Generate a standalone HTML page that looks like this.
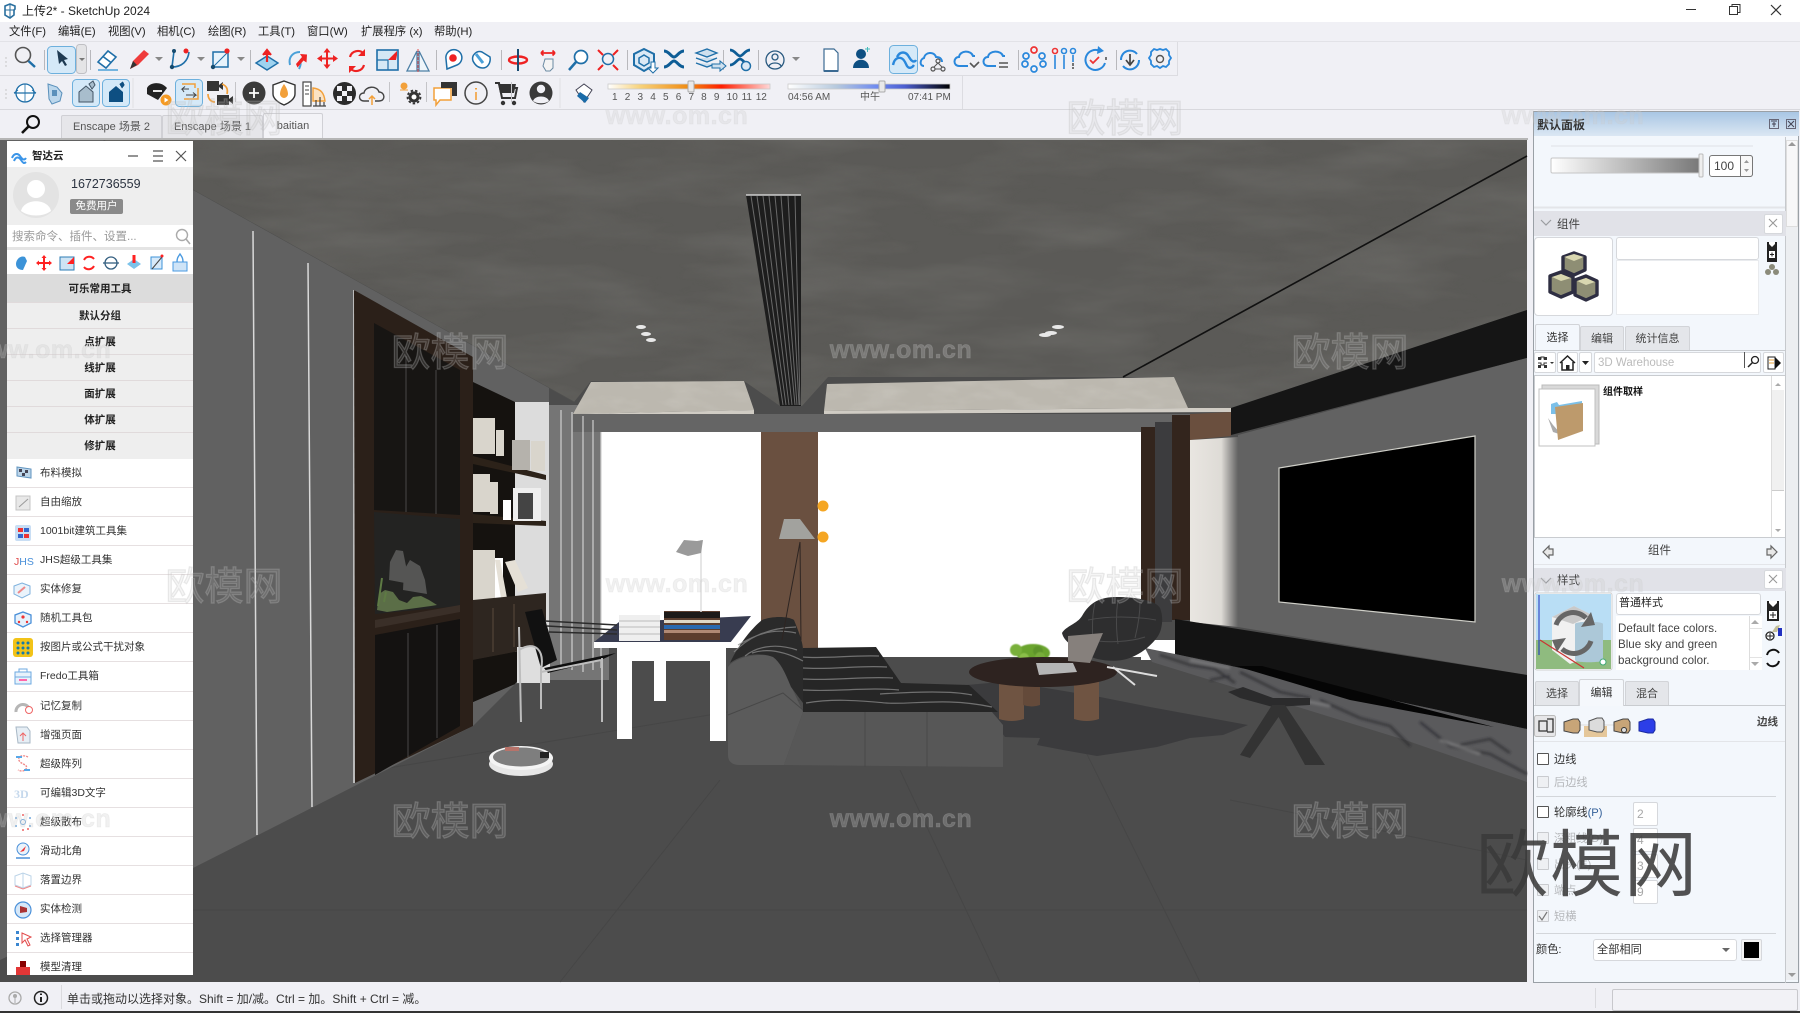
<!DOCTYPE html>
<html lang="zh"><head><meta charset="utf-8"><title>SketchUp 2024</title>
<style>
html,body{margin:0;padding:0;width:1800px;height:1013px;overflow:hidden;background:#f0f0f5}
body{position:relative;font-family:"Liberation Sans","Noto Sans CJK SC",sans-serif;color:#333}
.a{position:absolute}
.t{position:absolute;white-space:nowrap;line-height:1}
svg{position:absolute;left:0;top:0;overflow:visible}
.menu span{position:absolute;top:25px;font-size:11.3px;line-height:14px;color:#222;white-space:nowrap}
.tab{position:absolute;top:115px;height:23px;background:#e6e6ea;border:1px solid #d0d0d5;border-bottom:0;box-sizing:border-box;font-size:11px;line-height:22px;color:#555;text-align:center;border-radius:2px 2px 0 0}
.grp{position:absolute;left:7px;width:186px;background:#eee;border-bottom:1px solid #e0dadb;box-sizing:border-box;font-size:10.5px;font-weight:bold;color:#222;text-align:center;height:26px;line-height:27px}
.row{position:absolute;left:7px;width:186px;height:29px;background:#fff;border-bottom:1px solid #e6e0e1;box-sizing:border-box;font-size:10.5px;line-height:29px;padding-left:33px;color:#333;white-space:nowrap}
.box{position:absolute;background:#fff;border:1px solid #d6d8dc;box-sizing:border-box;border-radius:2px}
.ptab{position:absolute;background:#e4e6ea;border:1px solid #d2d4d8;border-bottom:0;box-sizing:border-box;font-size:11px;text-align:center;color:#444;border-radius:2px 2px 0 0}
.ptab.on{background:#f3f7fc;color:#333}
.phd{position:absolute;left:1534px;width:252px;height:24px;background:#e1e2e8;font-size:11.5px;color:#444;line-height:25px}
.cb{position:absolute;left:1537px;width:12px;height:12px;background:#fff;border:1px solid #555;box-sizing:border-box;border-radius:1px}
.cb.d{background:#eef0f3;border-color:#c9cbcf}
.l{position:absolute;left:1554px;font-size:11.2px;line-height:14px;color:#333;white-space:nowrap}
.l.d{color:#b5b7ba}
.wm{position:absolute;font-family:"Noto Sans CJK SC",sans-serif;font-size:39px;line-height:1;color:rgba(190,190,190,.16);-webkit-text-stroke:1.2px rgba(190,190,190,.3);white-space:nowrap;transform:translateX(-50%)}
.ww{position:absolute;font-family:"Liberation Sans",sans-serif;font-weight:bold;font-size:25px;line-height:1;letter-spacing:.5px;color:rgba(205,205,205,.28);-webkit-text-stroke:.8px rgba(200,200,200,.22);white-space:nowrap;transform:translateX(-50%)}
</style></head><body>

<!-- title bar -->
<div class="a" style="left:0;top:0;width:1800px;height:22px;background:#fff"></div>
<svg width="20" height="20" style="left:2px;top:2px"><path d="M3 4l5-2 5 2v3l-1 1v5l-4 3-5-3z" fill="none" stroke="#2a6f9e" stroke-width="1.6"/><path d="M8 2v14M3 8h10" stroke="#2a6f9e" stroke-width="1"/></svg>
<div class="t" style="left:22px;top:5px;font-size:12px;color:#222">上传2* - SketchUp 2024</div>
<svg width="1800" height="24"><path d="M1686 9.5h10" stroke="#333"/><rect x="1729.5" y="6.5" width="8" height="8" fill="none" stroke="#333"/><path d="M1732 6.5v-2h8v8h-2" fill="none" stroke="#333"/><path d="M1771 5l10 10M1781 5l-10 10" stroke="#333" stroke-width="1.2"/></svg>

<!-- menu -->
<div class="menu">
<span style="left:9px">文件(F)</span><span style="left:58px">编辑(E)</span><span style="left:108px">视图(V)</span><span style="left:157px">相机(C)</span><span style="left:208px">绘图(R)</span><span style="left:258px">工具(T)</span><span style="left:307px">窗口(W)</span><span style="left:361px">扩展程序 (x)</span><span style="left:434px">帮助(H)</span>
</div>

<!-- scene -->
<svg width="1800" height="1013">
<defs>
<filter id="n1" x="0" y="0" width="100%" height="100%"><feTurbulence type="fractalNoise" baseFrequency="0.007 0.03" numOctaves="4" seed="7"/><feColorMatrix values="0 0 0 0 0.27  0 0 0 0 0.27  0 0 0 0 0.25  1.5 0 0 0 -0.55"/></filter>
<filter id="n2" x="0" y="0" width="100%" height="100%"><feTurbulence type="fractalNoise" baseFrequency="0.03 0.08" numOctaves="3" seed="3"/><feColorMatrix values="0 0 0 0 0.62  0 0 0 0 0.6  0 0 0 0 0.55  1.6 0 0 0 -0.65"/></filter>
<filter id="bl"><feGaussianBlur stdDeviation="1.3"/></filter>
<filter id="bs"><feGaussianBlur stdDeviation=".6"/></filter>
<linearGradient id="curve" x1="0" x2="1" y1="0" y2="0"><stop offset="0" stop-color="#e9e6e1"/><stop offset=".65" stop-color="#dedbd6"/><stop offset="1" stop-color="#626262"/></linearGradient>
<clipPath id="ceil"><path d="M0 140H1527V310L1231 408 1188 408 1174 377H828L802 406H780L744 381H591L574 402 103 140Z"/></clipPath>
<clipPath id="beam"><path d="M591 382L744 381 754 410 573 414ZM827 384L1174 377 1188 408 824 411Z"/></clipPath>
</defs>
<rect x="0" y="140" width="1527" height="842" fill="#4c4c4c"/>
<!-- floor lines -->
<path d="M195 800L800 700M0 910H1527M1070 720L1200 982M560 982L720 780M1230 800L1527 860M900 770L1000 982" stroke="#464646" fill="none"/>
<!-- back wall -->
<rect x="549" y="405" width="60" height="275" fill="#757575"/>
<rect x="601" y="432" width="160" height="216" fill="#fff"/>
<rect x="761" y="416" width="57" height="232" fill="#6a5040"/>
<rect x="818" y="432" width="323" height="225" fill="#fff"/>
<rect x="573" y="414" width="660" height="18" fill="#656565"/>
<!-- ceiling -->
<path d="M0 140H1527V310L1231 408 1188 408 1174 377H828L802 406H780L744 381H591L574 402 103 140Z" fill="#5b5a57"/>
<g clip-path="url(#ceil)"><rect x="0" y="140" width="1527" height="280" filter="url(#n1)" opacity=".32"/></g>
<path d="M103 140L574 402" stroke="#4f4f4e" fill="none"/>
<!-- beams -->
<path d="M591 382L744 381 754 410 573 414Z" fill="#bcb8af"/>
<path d="M827 384L1174 377 1188 408 824 411Z" fill="#bcb8af"/>
<path d="M573 414L754 410V414H573ZM824 411L1188 408 1231 408V412L824 414Z" fill="#d0ccc4"/>
<g clip-path="url(#beam)"><rect x="570" y="375" width="620" height="42" filter="url(#n2)" opacity=".5"/></g>
<!-- vent -->
<path d="M746 195H801V406H780Z" fill="#1d1d1d"/>
<path d="M751 196L783 405M757 196L786 405M763 196L789 405M769 196L792 405M775 196L795 405M781 196L797 405M788 196L799 405M795 196L800 405" stroke="#6a6a6a" stroke-width="1"/>
<path d="M746 195H801" stroke="#cfcfcf" stroke-width="1.5"/>
<!-- spots -->
<g fill="#e8e8e8"><ellipse cx="641" cy="327" rx="5" ry="2"/><ellipse cx="646" cy="334" rx="5" ry="2"/><ellipse cx="651" cy="340" rx="5" ry="2"/><ellipse cx="1058" cy="327" rx="6" ry="2"/><ellipse cx="1051" cy="333" rx="6" ry="2"/><ellipse cx="1045" cy="335" rx="6" ry="2"/></g>
<!-- ceiling line -->
<path d="M1123 377L1527 156" stroke="#111" stroke-width="1.6"/>
<!-- left wall -->
<path d="M0 140H103L549 388 549 405V680L515 684 473 726 195 867 0 960Z" fill="#616161"/>
<path d="M253 231L257 835M308 263L312 807M354 290V783" stroke="#d9d9d9" stroke-width="1.5"/>
<!-- cabinet -->
<path d="M354 290L473 357V726L355 783Z" fill="#2b2019"/>
<path d="M374 323L460 370V515L374 510Z" fill="#171513"/>
<path d="M375 635L460 619V726L375 775Z" fill="#141211"/>
<path d="M374 512L460 519V606L375 614Z" fill="#232322"/>
<path d="M375 620L460 605V612L375 628Z" fill="#3a2f28"/>
<path d="M406 356V512M408 633V757M436 370V514M437 625V738" stroke="#555" stroke-width=".8"/>
<path d="M389 580l1-18 6-12 7 1 3 15-1 17zM403 590l1-20 6-10 10 6 5 14 2 14z" fill="#555554"/>
<path d="M377 610l2-16 6-4 8 2 6 8 8 3 6-6 8-1 8 4 8 5-6 1-44 6z" fill="#5b6e47"/>
<path d="M378 606l4-28M384 602l2-10" stroke="#5e7a44" stroke-width="2"/>
<!-- bookshelf -->
<path d="M473 382L515 402V684L473 702Z" fill="#15120f"/>
<rect x="515" y="402" width="34" height="278" fill="#dcdcdc"/>
<path d="M473 456L546 475V480L473 464Z" fill="#2c2219"/>
<path d="M473 514L546 521V526L473 523Z" fill="#2c2219"/>
<g fill="#d9d5cc"><rect x="473" y="418" width="22" height="36"/><rect x="496" y="430" width="8" height="26"/><rect x="512" y="440" width="18" height="30" fill="#b5b2ac"/><rect x="531" y="441" width="14" height="30"/><rect x="473" y="474" width="17" height="38"/><rect x="490" y="482" width="8" height="32"/><rect x="503" y="500" width="8" height="20" fill="#fff"/><rect x="513" y="488" width="28" height="33" fill="#eee"/><rect x="473" y="550" width="22" height="50"/><rect x="495" y="558" width="8" height="40" fill="#fff"/></g>
<rect x="518" y="493" width="15" height="26" fill="#444"/>
<path d="M505 562L515 560 528 588 518 592ZM495 560h5l7 38h-6z" fill="#e5e0d6"/>
<path d="M473 600L546 593V646L473 660Z" fill="#2e2620"/>
<path d="M473 660L546 646 515 684 473 702Z" fill="#15120f"/>
<path d="M493 608V652M514 604V647" stroke="#5a4a3c"/>
<!-- stripes -->
<path d="M561 410V670M572 412V670M583 416V672M593 420V670M601 432V668" stroke="#cfcfcf" stroke-width="1.2"/>
<!-- right side -->
<rect x="1141" y="427" width="14" height="215" fill="#33251d"/>
<rect x="1155" y="422" width="17" height="200" fill="#3c3c3e"/>
<rect x="1172" y="415" width="18" height="205" fill="#33251d"/>
<path d="M1190 414L1231 412V436L1190 440Z" fill="#6a4f3e"/>
<path d="M1231 408L1527 310V358L1231 435Z" fill="#151515"/>
<path d="M1238 435L1527 358V675L1238 627Z" fill="#626262"/>
<path d="M1190 440L1238 437V627L1190 622Z" fill="url(#curve)"/>
<path d="M1279 468L1475 436V622L1279 602Z" fill="#000" stroke="#cfcfc8" stroke-width="1.2"/>
<path d="M1175 619L1527 675V729L1175 654Z" fill="#131313"/>
<path d="M1141 640V660H1175V640Z" fill="#fff"/>
<path d="M1145 648L1175 654 1527 729V782L1405 740 1152 662Z" fill="#5a5a5c"/>
<g filter="url(#bl)"><path d="M1160 655l30 10 25 4 20 14M1240 672l40 20 30 6M1320 700l40 18 30 8 20 20M1420 722l30 24 40 8 37 20M1460 745l30-6 20 14M1230 676l-20 4" stroke="#2a2a2c" stroke-width="2.4" fill="none" opacity=".75"/><path d="M1190 660l40 8M1300 700l30 6M1440 740l40 14" stroke="#8a8a8c" stroke-width="3" fill="none" opacity=".6"/></g>
<path d="M1236 666H1262L1494 727 1350 700Z" fill="#050505"/>
<!-- rug -->
<path d="M967 685L1000 682 1040 687 1100 697 1150 707 1210 718 1248 725 1223 735 1190 738 1157 747 1097 756 1063 750 1037 745 1040 738 1005 737Z" fill="#3b3b3d"/>
<!-- coffee table -->
<g filter="url(#bs)"><ellipse cx="1033" cy="653" rx="17" ry="9" fill="#6aa42e"/><circle cx="1016" cy="650" r="6" fill="#79b03a"/><circle cx="1038" cy="651" r="5" fill="#5d9429"/><circle cx="1024" cy="658" r="5" fill="#8bbf48"/><circle cx="1040" cy="657" r="5" fill="#78ad3a"/></g>
<path d="M999 675h25v44q-12 4-25 0z" fill="#6f5442"/><path d="M1023 675h17v30q-8 3-17 0z" fill="#644a3a"/><path d="M1074 678h25v41q-12 4-25 0z" fill="#6f5442"/>
<ellipse cx="1043" cy="672" rx="74" ry="15" fill="#2e2320"/>
<path d="M1036 663h37l4 9-38 3z" fill="#b5b5b5"/>
<!-- armchair -->
<path d="M1062 633C1066 626 1077 624 1082 616 1090 602 1100 597 1117 597 1135 597 1155 600 1160 608 1164 618 1162 630 1158 636 1150 648 1135 658 1122 660 1110 662 1095 660 1085 654 1075 648 1064 642 1062 633Z" fill="#2e2e2f"/>
<path d="M1095 603c-3 12-3 25-2 40M1118 599c-2 14-2 30 0 45M1140 602c0 12-2 24-5 36M1088 620c20-4 45-4 68 0M1090 640c18 3 40 2 55-3" stroke="#4a4a4b" fill="none"/>
<path d="M1068 636L1103 633 1090 663 1068 661Z" fill="#86807c"/>
<path d="M1107 667L1157 676M1113 667L1135 685" stroke="#ddd" stroke-width="2"/>
<!-- stool -->
<path d="M1228 692L1243 687 1273 698 1310 698V705L1273 707 1240 698Z" fill="#2b2b2c"/>
<path d="M1272 705L1240 755 1250 758 1282 712ZM1272 705L1305 765 1325 765 1285 705Z" fill="#333"/>
<!-- sofa -->
<path d="M728 667C735 657 760 652 775 657 785 668 790 678 792 688L803 712 784 765H740Q728 765 728 755Z" fill="#5b5b5b"/>
<path d="M728 715L783 693 803 710" stroke="#474747" fill="none"/>
<path d="M803 712H992L1003 725V767L784 765Z" fill="#575757"/>
<path d="M803 648L876 647 901 683 969 685 998 712H803Z" fill="#262626"/>
<path d="M730 663C738 645 752 628 762 620 772 616 788 616 794 620 798 630 803 642 803 650V703L791 687C785 672 780 662 773 657 760 652 742 654 730 663Z" fill="#2a2a2a"/>
<g stroke="#8a8a8a" fill="none" stroke-width="1.2" opacity=".75">
<path d="M734 652c12-12 30-24 62-25M738 645c14-8 32-18 58-12M745 656c10-8 28-14 52-6M752 653c12-4 28-4 51 8"/>
<path d="M803 657c22 2 48-2 76-1M803 668c30 2 56-3 84-1M803 679c32 2 60-3 90-1M803 690c34 2 64-3 96 0M806 703c30-5 56-2 80 0s60-6 106 4M880 694c30-2 70-4 92 1"/>
</g>
<path d="M865 712V767M927 712V767" stroke="#484848"/>
<!-- floor lamp -->
<path d="M800 542L782 640M800 542L801 640" stroke="#2e2522" stroke-width="1"/>
<path d="M784 519H800L815 539H779Z" fill="#a2a29e"/>
<circle cx="823" cy="506" r="5.5" fill="#f5a623"/><circle cx="823" cy="537" r="5.5" fill="#f5a623"/>
<!-- desk -->
<path d="M619 622L751 616 730 643 594 642Z" fill="#383c50"/>
<path d="M594 642H731V648H594Z" fill="#fff"/>
<rect x="617" y="647" width="109" height="14" fill="#fff"/>
<rect x="617" y="647" width="15" height="92" fill="#fff"/><rect x="710" y="647" width="16" height="94" fill="#fff"/><rect x="654" y="660" width="12" height="41" fill="#fff"/>
<rect x="619" y="615" width="41" height="26" fill="#efefef"/><path d="M619 621h41M619 627h41M619 634h41" stroke="#bbb"/>
<rect x="664" y="611" width="56" height="29" fill="#5c3e2e"/><rect x="664" y="612" width="56" height="6" fill="#1d1a18"/><rect x="664" y="620" width="56" height="3" fill="#e0d8c8"/><rect x="664" y="625" width="56" height="4" fill="#2a69b0"/><rect x="664" y="630" width="56" height="3" fill="#b08a75"/>
<path d="M701 540V612" stroke="#ddd" stroke-width="1.5"/>
<path d="M676 552L684 540 697 541 703 540 701 553 688 556Z" fill="#9a9a9a"/>
<!-- chair -->
<rect x="517" y="647" width="33" height="36" fill="#dedede"/>
<path d="M525 612L542 609 557 660 541 668Z" fill="#111"/>
<path d="M544 668L616 653 601 660 548 673Z" fill="#0e0e0e"/>
<path d="M519 627L521 722M541 667V709M602 658V722M519 650C535 640 545 650 541 670M541 672L601 660" stroke="#bdbdbd" stroke-width="2" fill="none"/>
<path d="M545 621L617 625M547 626L617 630M549 632L617 634" stroke="#2b2b2b" stroke-width="1.5"/>
<!-- robot -->
<ellipse cx="521" cy="764" rx="32" ry="12" fill="#e6e6e6"/><ellipse cx="521" cy="758" rx="32" ry="12" fill="#f4f4f4"/><ellipse cx="521" cy="757" rx="28" ry="9.5" fill="#7e7e7e"/><rect x="505" y="747" width="14" height="4" fill="#b7736a"/><rect x="540" y="752" width="9" height="6" fill="#222"/>
</svg>

<!-- left strip sits as viewport; sidebar -->
<div class="a" style="left:7px;top:141px;width:186px;height:26px;background:#fff"></div>
<div class="a" style="left:7px;top:167px;width:186px;height:58px;background:#eeeeee"></div>
<div class="a" style="left:7px;top:225px;width:186px;height:22px;background:#fff"></div>
<div class="a" style="left:7px;top:247px;width:186px;height:3px;background:#e4e4e4"></div>
<div class="a" style="left:7px;top:250px;width:186px;height:24px;background:#fff"></div>
<svg width="1800" height="1013">
<path d="M12 158c2-5 6-5 8-2 2 3 4 5 6 2M14 161c2-5 5-4 7-1 2 3 3 4 5 2" fill="none" stroke="#3b95e8" stroke-width="2"/>
<path d="M128 156h10M153 151h10M153 156h10M153 161h10M176 151l10 10M186 151l-10 10" stroke="#555" stroke-width="1.2"/>
<circle cx="36" cy="195" r="23" fill="#e3e3e3"/><circle cx="36" cy="189" r="9" fill="#fff"/><path d="M21 211c3-13 27-13 30 0-8 6-22 6-30 0z" fill="#fff"/>
<circle cx="182" cy="235" r="5.5" fill="none" stroke="#aaa" stroke-width="1.4"/><path d="M186 239l4 5" stroke="#aaa" stroke-width="1.6"/>
<path d="M16 264c0-5 5-9 9-7l2 4-4 9c-4 0-7-2-7-6z" fill="#3c93d8"/>
<path d="M44 258v10M39 263h10" stroke="#f22" stroke-width="2"/><path d="M44 255l-2.500 3h5zM44 271l-2.500-3h5zM36 263l3-2.500v5zM52 263l-3-2.500v5z" fill="#f22"/>
<rect x="60" y="257" width="14" height="13" fill="#cfe4f4" stroke="#2c7cb5"/><path d="M67 264l7-7v7z" fill="#f22"/>
<path d="M84 260a6 6 0 0 1 10-1M94 266a6 6 0 0 1-10 1" fill="none" stroke="#f22" stroke-width="2"/>
<circle cx="111" cy="263" r="6" fill="none" stroke="#345f80" stroke-width="1.3"/><path d="M103 263h16" stroke="#345f80" stroke-width="1.3"/>
<path d="M127 264l7-5 7 5-7 5z" fill="#7cc3ea"/><path d="M134 255v8" stroke="#f22" stroke-width="3"/>
<rect x="151" y="257" width="11" height="12" fill="#d7eafa" stroke="#3c93d8"/><path d="M152 269l10-12" stroke="#444"/><circle cx="162" cy="256" r="1.500" fill="#f22"/>
<rect x="173" y="262" width="14" height="9" fill="#cfe4f7" stroke="#4a9ae0"/><path d="M177 262c0-4 1-5 3-8 2 3 3 4 3 8" fill="none" stroke="#4a9ae0" stroke-width="1.4"/>
</svg>
<div class="t" style="left:32px;top:151px;font-size:10.5px;font-weight:bold;color:#222">智达云</div>
<div class="t" style="left:71px;top:178px;font-size:12.5px;color:#2b3340">1672736559</div>
<div class="a" style="left:70px;top:199px;width:53px;height:15px;background:#8a8a8a;border-radius:2px;color:#fff;font-size:10.5px;line-height:15px;text-align:center">免费用户</div>
<div class="t" style="left:12px;top:232px;font-size:11.500px;color:#9a9a9a">搜索命令、插件、设置...</div>

<div class="grp" style="top:274px;height:29px;line-height:30px;background:#dcdcdc">可乐常用工具</div>
<div class="grp" style="top:303px">默认分组</div>
<div class="grp" style="top:329px">点扩展</div>
<div class="grp" style="top:355px">线扩展</div>
<div class="grp" style="top:381px">面扩展</div>
<div class="grp" style="top:407px">体扩展</div>
<div class="grp" style="top:433px;height:27px">修扩展</div>
<div class="row" style="top:459px">布料模拟</div>
<div class="row" style="top:488px">自由缩放</div>
<div class="row" style="top:517px">1001bit建筑工具集</div>
<div class="row" style="top:546px">JHS超级工具集</div>
<div class="row" style="top:575px">实体修复</div>
<div class="row" style="top:604px">随机工具包</div>
<div class="row" style="top:633px">按图片或公式干扰对象</div>
<div class="row" style="top:662px;height:30px">Fredo工具箱</div>
<div class="row" style="top:692px">记忆复制</div>
<div class="row" style="top:721px">增强页面</div>
<div class="row" style="top:750px">超级阵列</div>
<div class="row" style="top:779px">可编辑3D文字</div>
<div class="row" style="top:808px">超级散布</div>
<div class="row" style="top:837px">滑动北角</div>
<div class="row" style="top:866px">落置边界</div>
<div class="row" style="top:895px">实体检测</div>
<div class="row" style="top:924px">选择管理器</div>
<div class="row" style="top:953px;height:22px;border:0">模型清理</div>
<svg width="200" height="1013">
<!-- list icons -->
<path d="M17 467l14 2v9l-14-2z" fill="#bcd4e8" stroke="#5f93bf"/><path d="M19 469h3v3h-3zM25 470h3v3h-3zM22 473h3v3h-3z" fill="#445"/>
<rect x="16" y="496" width="14" height="14" fill="#e8e8e8" stroke="#c4c4c4"/><path d="M19 507l9-8" stroke="#9a9a9a"/>
<rect x="15" y="525" width="16" height="16" rx="2" fill="#c9def4"/><rect x="18" y="528" width="5" height="4" fill="#e33"/><rect x="24" y="528" width="5" height="4" fill="#36c"/><rect x="18" y="534" width="5" height="4" fill="#36c"/><rect x="24" y="534" width="5" height="4" fill="#e33"/>
<text x="14" y="565" font-size="10.500" font-family="Liberation Sans" fill="#4a90d9"><tspan fill="#e04848">J</tspan>HS</text>
<path d="M22 583l8 3v8l-8 4-8-4v-8z" fill="#eaf3fb" stroke="#7fb2de"/><path d="M18 593l7-6" stroke="#e88" stroke-width="2"/>
<path d="M23 612l8 3v8l-8 4-8-4v-8z" fill="#e6f1fb" stroke="#4a90d9" stroke-width="1.300"/><circle cx="23" cy="617" r="1.600" fill="#e33"/><circle cx="19" cy="622" r="1.200" fill="#e33"/><circle cx="27" cy="622" r="1.200" fill="#e33"/>
<rect x="13" y="638" width="20" height="19" rx="3" fill="#f2c318"/><g fill="#177ba8"><circle cx="18" cy="643" r="1.500"/><circle cx="23" cy="643" r="1.500"/><circle cx="28" cy="643" r="1.500"/><circle cx="18" cy="648" r="1.500"/><circle cx="23" cy="648" r="1.500"/><circle cx="28" cy="648" r="1.500"/><circle cx="18" cy="653" r="1.500"/><circle cx="23" cy="653" r="1.500"/><circle cx="28" cy="653" r="1.500"/></g>
<rect x="15" y="672" width="16" height="12" fill="#e8f2fb" stroke="#6eaae0"/><path d="M19 672v-3h8v3M15 677h16" stroke="#6eaae0" fill="none"/><path d="M19 680h8" stroke="#f6a" stroke-width="2"/>
<path d="M16 712a7 7 0 0 1 14-1" fill="none" stroke="#b6b6b6" stroke-width="3"/><circle cx="29" cy="710" r="3.500" fill="#fff" stroke="#e66"/>
<path d="M16 727h11l3 4v12H18z" fill="#e6eef5" stroke="#a7b7c5"/><path d="M23 741v-8M20 736l3-3 3 3" stroke="#e66" fill="none"/>
<path d="M28 757c-6-3-12 0-8 5 4 3 8 3 6 7-2 3-6 2-8 1" fill="none" stroke="#f08a8a" stroke-width="1.400" stroke-dasharray="2 1"/><path d="M16 757h6M24 770h6" stroke="#58a8e8" stroke-width="2"/>
<text x="14" y="798" font-size="12" font-family="Liberation Serif" font-weight="bold" fill="#c5d8ec">3D</text>
<g fill="#6fa7dc"><circle cx="23" cy="822" r="2.500" fill="none" stroke="#6fa7dc"/><circle cx="16" cy="818" r="1"/><circle cx="30" cy="818" r="1"/><circle cx="16" cy="826" r="1"/><circle cx="30" cy="826" r="1"/><circle cx="23" cy="815" r="1" fill="#e66"/><circle cx="23" cy="830" r="1" fill="#e66"/><circle cx="28" cy="829" r="1" fill="#e66"/></g>
<circle cx="23" cy="849" r="6" fill="#eaf3fb" stroke="#4a90d9"/><path d="M20 852l6-6-2 5z" fill="#e33"/><path d="M16 858h14" stroke="#4a90d9" stroke-width="1.500"/>
<path d="M15 876l8-3 8 3v9l-8 3-8-3z" fill="#fff" stroke="#bcd4e8"/><path d="M23 873v15" stroke="#bcd4e8"/><path d="M15 886l8 3 8-3" stroke="#e88" fill="none"/>
<circle cx="23" cy="910" r="8" fill="#d7e8f8" stroke="#4a90d9" stroke-width="1.200"/><path d="M20 906l7 2v4l-7 1z" fill="#a33"/>
<path d="M16 931h3v3h-3zM16 937h3v3h-3zM16 943h3v3h-3z" fill="#3a86d0"/><path d="M22 933l9 4-4 2 3 6-2 1-3-6-3 3z" fill="#fff" stroke="#e24a4a"/>
<path d="M20 961h6v6h-6z" fill="#800"/><path d="M16 967h14v8H16z" fill="#e23636"/>
</svg>

<!-- status bar -->
<div class="a" style="left:0;top:983px;width:1800px;height:28px;background:#f0f0f5"></div>
<div class="a" style="left:0;top:1011px;width:1800px;height:2px;background:#333"></div>
<div class="a" style="left:61px;top:985px;width:1px;height:24px;background:#dadade"></div>
<div class="a" style="left:1595px;top:988px;width:1px;height:20px;background:#dadade"></div>
<div class="a" style="left:1612px;top:989px;width:186px;height:22px;background:#f2f2f6;border:1px solid #c8c8cc;box-sizing:border-box;border-radius:2px"></div>
<svg width="100" height="1013"><circle cx="15" cy="998" r="6" fill="none" stroke="#aaa" stroke-width="1.300"/><circle cx="15" cy="996" r="2" fill="#aaa"/><path d="M15 998v5" stroke="#aaa"/><circle cx="41" cy="998" r="6.500" fill="none" stroke="#222" stroke-width="1.500"/><path d="M41 997v5M41 993.500v1.500" stroke="#222" stroke-width="2"/></svg>
<div class="t" style="left:67px;top:993px;font-size:12px;color:#333">单击或拖动以选择对象。Shift = 加/减。Ctrl = 加。Shift + Ctrl = 减。</div>

<!-- toolbars bg -->
<div class="a" style="left:0;top:41px;width:1800px;height:1px;background:#e2e2e7"></div>
<div class="a" style="left:0;top:75px;width:1177px;height:1px;background:#dcdce1"></div>
<div class="a" style="left:0;top:109px;width:962px;height:1px;background:#d8d8dd"></div>
<div class="a" style="left:962px;top:76px;width:1px;height:34px;background:#dcdce1"></div>
<div class="a" style="left:962px;top:109px;width:838px;height:1px;background:#d8d8dd"></div>
<div class="a" style="left:1177px;top:42px;width:1px;height:34px;background:#dcdce1"></div>
<div class="a" style="left:0;top:138px;width:1528px;height:2px;background:#b5b5b5"></div>

<!-- tabs -->
<div class="tab" style="left:61px;width:101px">Enscape 场景 2</div>
<div class="tab" style="left:162px;width:101px">Enscape 场景 1</div>
<div class="tab" style="left:263px;top:113px;height:25px;width:60px;background:#f3f3f7;line-height:25px">baitian</div>
<svg width="60" height="140"><circle cx="33" cy="122" r="6" fill="none" stroke="#111" stroke-width="2"/><path d="M28.500 126.500L22 133" stroke="#111" stroke-width="2.600"/></svg>

<!-- toolbar icons -->
<svg width="1800" height="110">
<rect x="47.500" y="46.500" width="28" height="27" rx="4" fill="#d5e9f8" stroke="#6db0dd"/>
<rect x="76.500" y="44.500" width="10" height="29" rx="3" fill="#e4e4e6" stroke="#c0c0c4"/><path d="M79 58h6l-3 3z" fill="#777"/>
<g stroke="#b8b8bc"><path d="M44.500 50v20M90.500 50v20M250.500 50v20M436.500 50v20M501.500 50v20M627.500 50v20M723.500 50v20M758.500 50v20M1018.500 50v20M1116.500 50v20"/></g>
<circle cx="23" cy="55" r="7.500" fill="none" stroke="#555" stroke-width="1.600"/><path d="M28.500 61L35 67" stroke="#1f6fa8" stroke-width="2.400"/>
<path d="M57 50l2 14 3-3 3 5 2-1-3-5 4-1z" fill="#1e3a52"/>
<path d="M98 62l10-11 8 6-10 11z" fill="#fff" stroke="#1f6fa8" stroke-width="1.600"/><path d="M103 56.500l8 6" stroke="#1f6fa8" stroke-width="1.600"/><path d="M98 70h20" stroke="#4aa0d8" stroke-width="1.600"/>
<path d="M130 69l3-8 11-11 5 4-11 11z" fill="#ef3b3b"/><path d="M130 69l3-8 4 4z" fill="#333"/>
<path d="M155 57h8l-4 4z" fill="#888"/><path d="M197 57h8l-4 4z" fill="#888"/><path d="M237 57h8l-4 4z" fill="#888"/><path d="M792 57h8l-4 4z" fill="#888"/>
<path d="M172 67c10 0 16-6 17-15" fill="none" stroke="#1f6fa8" stroke-width="1.600"/><path d="M172 67l2-16" stroke="#1f6fa8" stroke-width="1.600"/><circle cx="172" cy="67" r="2.200" fill="#164a6e"/><circle cx="174" cy="51" r="2" fill="#164a6e"/><circle cx="186" cy="51" r="2.500" fill="#e22"/>
<rect x="213" y="52" width="15" height="15" fill="#e8f3fb" stroke="#1f6fa8" stroke-width="1.500"/><path d="M213 67l15-15" stroke="#1f6fa8"/><circle cx="213" cy="67" r="2.200" fill="#164a6e"/><circle cx="227" cy="51" r="2.600" fill="#e22"/>
<path d="M256 63l11-7 11 7-11 7z" fill="#9ed2ef" stroke="#1f6fa8" stroke-width="1.400"/><path d="M267 62v-9M263 55l4-5 4 5" fill="#e22" stroke="#e22" stroke-width="2.200"/>
<path d="M290 65c-2-8 3-13 10-13" fill="none" stroke="#4aa0d8" stroke-width="2"/><path d="M299 69c2-4 2-6 1-9" fill="none" stroke="#4aa0d8" stroke-width="2"/><path d="M296 64l6-7-2-3 7 .5-.5 8-3-2-6 7z" fill="#e22"/>
<path d="M327 52v13M321 58.500h13" stroke="#e22" stroke-width="2"/><path d="M327 48l-3.500 4.500h7zM327 69l-3.500-4.500h7zM317 58.500l5-3.500v7zM338 58.500l-5-3.500v7z" fill="#e22"/>
<path d="M350 57a8 8 0 0 1 14-3M364 65a8 8 0 0 1-14 3" fill="none" stroke="#e22" stroke-width="2.200"/><path d="M365 49v7h-7zM349 73v-7h7z" fill="#e22"/>
<rect x="377" y="50" width="21" height="20" fill="#d5e8f5" stroke="#1f6fa8" stroke-width="1.600"/><path d="M377 60h11v10" fill="none" stroke="#1f6fa8" stroke-width="1.200"/><path d="M388 60l9-9v4l-1 5z" fill="#e22"/>
<path d="M417 51v20h-10zM419 51v20h10z" fill="#eef5fb" stroke="#4d7fa5" stroke-width="1.300"/><path d="M418 49v24" stroke="#e25050" stroke-dasharray="3 1"/>
<path d="M446 59a8 8 0 1 1 11 6l-10 4z" fill="#fff" stroke="#1f6fa8" stroke-width="1.500"/><circle cx="453" cy="58" r="3.800" fill="#e22"/>
<path d="M473 61c-2-6 4-11 9-9l8 5c1 5-2 11-7 11s-8-3-10-7z" fill="#fff" stroke="#1f6fa8" stroke-width="1.500"/><path d="M476 54l7 9" stroke="#4aa0d8" stroke-width="3"/>
<ellipse cx="518" cy="60" rx="9" ry="3.500" fill="none" stroke="#e22" stroke-width="2.400"/><path d="M518 49v22" stroke="#1a4c72" stroke-width="2"/>
<path d="M541 53h14M541 53l2.500-2.500M541 53l2.500 2.500M555 53l-2.500-2.500M555 53l-2.500 2.500" stroke="#e22" stroke-width="1.800" fill="none"/><path d="M545 59h8v9l-3 3h-4l-3-5z" fill="#f4f4f4" stroke="#6a8aa2"/>
<circle cx="581" cy="57" r="6.500" fill="#fff" stroke="#1f6fa8" stroke-width="1.700"/><path d="M576 62l-7 8" stroke="#1f6fa8" stroke-width="2.500"/>
<circle cx="608" cy="59" r="5.500" fill="none" stroke="#1f6fa8" stroke-width="1.500"/><path d="M598 50l5 5M618 50l-5 5M598 70l5-5M618 70l-5-5" stroke="#e22" stroke-width="2"/>
<path d="M644 49l10 5v11l-10 6-10-6V54z" fill="#dbe9f5" stroke="#1f6fa8" stroke-width="2"/><path d="M644 55l5 3v5l-5 3-5-3v-5z" fill="none" stroke="#1f6fa8" stroke-width="1.500"/><path d="M651 62h4v6h3l-5 5-5-5h3z" fill="#fff" stroke="#1f6fa8"/>
<path d="M664 51c5 0 7 6 10 6s5-6 10-6M664 67c5 0 7-6 10-6s5 6 10 6" fill="none" stroke="#0e5d96" stroke-width="3"/>
<path d="M696 53l11-4 10 4-10 4zM696 58l11 4 10-4M696 63l11 4 8-3" fill="#cfe0ee" stroke="#1f6fa8" stroke-width="1.300"/><path d="M712 64h8v-3l6 5-6 5v-3h-8z" fill="#cfe0ee" stroke="#1f6fa8"/>
<path d="M730 50c5 0 7 6 10 6s5-6 10-6M730 65c5 0 7-6 10-6s5 6 10 6" fill="none" stroke="#0e5d96" stroke-width="2.800"/><circle cx="746" cy="66" r="4.500" fill="#dbe9f5" stroke="#1f6fa8" stroke-width="1.500"/>
<circle cx="775" cy="60" r="9" fill="none" stroke="#2a5a80" stroke-width="1.300"/><circle cx="775" cy="57" r="3" fill="none" stroke="#2a5a80" stroke-width="1.300"/><path d="M769 66c2-4 10-4 12 0" fill="none" stroke="#2a5a80" stroke-width="1.300"/>
<path d="M824 49h10l4 4v18h-14z" fill="#fff" stroke="#3b6a92" stroke-width="1.200"/><path d="M824 71h14" stroke="#3b6a92" stroke-width="2"/>
<circle cx="861" cy="54" r="5" fill="#0e4f82"/><path d="M853 68c0-11 16-11 16 0z" fill="#0e4f82"/><path d="M865 49h5M867.500 47v5" stroke="#4bb" stroke-width="1"/>
<rect x="889.500" y="45.500" width="28" height="28" rx="4" fill="#d5e9f8" stroke="#6db0dd"/>
<path d="M893 65c2-9 9-9 12-3l2 4c2 3 5 2 7-1M897 57c3-6 9-6 12 0l2 3c2 2 4 2 5 0" fill="none" stroke="#2a88dc" stroke-width="2.400"/>
<path d="M924 66c-5 0-4-7 0-8 1-6 10-7 12-1 5 0 6 3 6 5" fill="none" stroke="#2a88dc" stroke-width="2"/><circle cx="938" cy="61" r="2" fill="none" stroke="#555" stroke-width="1.200"/><circle cx="933" cy="69" r="2" fill="none" stroke="#555" stroke-width="1.200"/><circle cx="943" cy="69" r="2" fill="none" stroke="#555" stroke-width="1.200"/><path d="M938 63l-4 4M938 63l4 4M935 69h6" stroke="#555"/>
<path d="M968 66h-9c-6 0-6-9 0-9 1-7 12-7 14-1h2" fill="none" stroke="#2a88dc" stroke-width="2"/><path d="M970 63l4 4 5-5" fill="none" stroke="#555" stroke-width="1.600"/>
<path d="M996 66h-8c-6 0-6-9 0-9 1-7 13-7 15-1h2" fill="none" stroke="#2a88dc" stroke-width="2"/><path d="M999 63h9M999 67h9" stroke="#555" stroke-width="1.600"/>
<g fill="none" stroke="#2a88dc" stroke-width="1.700"><circle cx="1034" cy="50" r="3" stroke="#e33"/><circle cx="1026" cy="56" r="3"/><circle cx="1042" cy="56" r="3"/><circle cx="1025" cy="64" r="3"/><circle cx="1043" cy="64" r="3"/><circle cx="1034" cy="69" r="3"/></g>
<path d="M1055 55v14M1064 55v14M1073 55v7" stroke="#2a88dc" stroke-width="1.600"/><circle cx="1055" cy="51" r="2.500" fill="none" stroke="#e33" stroke-width="1.600"/><circle cx="1064" cy="51" r="2.500" fill="none" stroke="#2a88dc" stroke-width="1.600"/><circle cx="1073" cy="51" r="2.500" fill="none" stroke="#2a88dc" stroke-width="1.600"/><path d="M1073 63v3M1073 67v2" stroke="#555" stroke-width="1.600"/>
<path d="M1100 51a10 10 0 1 0 5 12" fill="none" stroke="#2a88dc" stroke-width="2"/><path d="M1098 46l6 5-7 3z" fill="#2a88dc"/><path d="M1090 60l3 3 6-6" fill="none" stroke="#e33" stroke-width="1.700"/><path d="M1106 57v3" stroke="#555" stroke-width="1.600"/>
<path d="M1121 60a9 9 0 0 1 16-6M1139 60a9 9 0 0 1-16 6" fill="none" stroke="#2a88dc" stroke-width="2"/><path d="M1130 54v10M1126 60l4 5 4-5" fill="none" stroke="#444" stroke-width="1.700"/>
<circle cx="1160" cy="59" r="3.500" fill="none" stroke="#555" stroke-width="1.400"/><path d="M1160 49l3 1 3-1 3 3 0 3 2 3-2 3 0 3-3 3-3-1-3 2-3-2-3 1-3-3 0-3-2-3 2-3 0-3 3-3 3 1z" fill="none" stroke="#2a88dc" stroke-width="1.800"/>

<!-- row 2 -->
<circle cx="25" cy="93" r="9" fill="#fff" stroke="#1f6fa8" stroke-width="1.300"/><path d="M14 93h22" stroke="#1f6fa8" stroke-width="1.300"/><path d="M25 84v18" stroke="#1f6fa8" stroke-width=".8"/><path d="M14 93l4-3M36 93l-4-3" stroke="#1f6fa8"/>
<path d="M48 84l9 3 5 6-2 8-8 3-3-5z" fill="#bcd7ec" stroke="#5a90bb"/><path d="M52 90h5v6h-5z" fill="#5a90bb"/>
<rect x="72.500" y="79.500" width="27" height="27" rx="4" fill="#d5e9f8" stroke="#6db0dd"/><rect x="102.500" y="79.500" width="27" height="27" rx="4" fill="#d5e9f8" stroke="#6db0dd"/>
<path d="M79 92l7-6 7 6v10H79z" fill="#a8bdcc" stroke="#456"/><path d="M89 84l4-3 2 4-3 4z" fill="#a8bdcc" stroke="#456"/>
<path d="M109 92l7-6 7 6v10h-14z" fill="#0e4f82"/><path d="M119 84l4-3 2 4-3 4z" fill="#0e4f82" stroke="#fff" stroke-width=".5"/>
<path d="M147 88c3-6 14-7 20 0l-9 12-11-6z" fill="#222"/><path d="M153 91h9" stroke="#fff" stroke-width="1.800"/><circle cx="166" cy="100" r="5.500" fill="#f59a23"/><path d="M164.500 97.500v5l4-2.500z" fill="#fff"/>
<rect x="175.500" y="79.500" width="27" height="27" rx="4" fill="#d5e9f8" stroke="#6db0dd"/>
<path d="M182 84h13v4M184 99h14v-11" fill="none" stroke="#f2a03a" stroke-width="1.500"/><path d="M189 89h-7l3-2.500M184 92l-2-3" stroke="#444" fill="none"/><path d="M186 95h10l-3-2.500M196 95l-3 2.500" stroke="#444" fill="none"/>
<rect x="207" y="81" width="12" height="10" fill="#333"/><path d="M219 85l4-3v8l-4-3z" fill="#333"/><rect x="217" y="95" width="12" height="10" fill="#333"/><path d="M229 99l4-3v8l-4-3z" fill="#333"/><path d="M222 84c5 2 6 6 5 10M208 94c0 5 3 8 7 8" fill="none" stroke="#f2a03a" stroke-width="1.700"/>
<circle cx="254" cy="93" r="11.500" fill="#3b3b3b"/><path d="M254 88v10M249 93h10" stroke="#fff" stroke-width="1.800"/>
<path d="M284 81l11 4v9c0 5-6 9-11 11-5-2-11-6-11-11v-9z" fill="#fff" stroke="#333" stroke-width="1.400"/><path d="M284 84c3 4 4 8 4 10s-2 4-4 4-4-2-4-4 1-6 4-10z" fill="#f2a03a"/>
<rect x="303" y="82" width="8" height="24" fill="#fff" stroke="#444" stroke-width="1.200"/><path d="M305 86h4M305 90h4M305 94h4" stroke="#444"/><path d="M313 88c8 1 11 5 12 13h-12z" fill="#fbe3c4" stroke="#f2a03a" stroke-width="1.400"/><path d="M313 106h13M316 100v6M320 97v9M324 102v4" stroke="#444" stroke-width="1.200"/>
<g fill="#2b2b2b"><rect x="333" y="82" width="23" height="23" rx="11.500"/></g><g fill="#f0f0f5"><rect x="337" y="86" width="5" height="5"/><rect x="347" y="86" width="5" height="5"/><rect x="342" y="91" width="5" height="5"/><rect x="337" y="96" width="5" height="5"/><rect x="347" y="96" width="5" height="5"/></g>
<path d="M369 101h-5c-6 0-6-8 0-8 1-7 13-8 15-1 6 0 7 9 0 9h-4" fill="none" stroke="#444" stroke-width="1.400"/><path d="M372 105v-9M369 99l3-3 3 3" fill="none" stroke="#f2a03a" stroke-width="1.500"/>
<circle cx="404" cy="86" r="3.500" fill="#f2a03a"/><path d="M400 90h8" stroke="#f2a03a" stroke-width="1"/><circle cx="414" cy="97" r="4" fill="#fff" stroke="#333" stroke-width="3"/><circle cx="414" cy="97" r="6.500" fill="none" stroke="#333" stroke-width="1.800" stroke-dasharray="2.500 2"/>
<path d="M434 88h17v12h-11l-4 5v-5h-2z" fill="#fff" stroke="#f2a03a" stroke-width="1.500"/><path d="M441 82h16v14h-5v-8h-11z" fill="#333"/>
<circle cx="476" cy="93" r="11" fill="none" stroke="#444" stroke-width="1.500"/><path d="M476 88v1.500" stroke="#f2a03a" stroke-width="2"/><path d="M476 92v8" stroke="#f2a03a" stroke-width="1.600"/>
<path d="M495 83h4l3 15h13l2-10h-17" fill="none" stroke="#333" stroke-width="2"/><path d="M498 84h18l-2 9h-14z" fill="#333"/><circle cx="503" cy="103" r="2.200" fill="#333"/><circle cx="514" cy="103" r="2.200" fill="#333"/>
<circle cx="541" cy="93" r="11.500" fill="#3a3a3a"/><circle cx="541" cy="89" r="4.200" fill="#f0f0f5"/><path d="M533 101c2-6 14-6 16 0-4 3-12 3-16 0z" fill="#f0f0f5"/>
<path d="M576 90l8-6 8 6-8 12z" fill="#fff" stroke="#445"/><path d="M580 92l9 6-4 5-8-7z" fill="#1a6ba8"/>
<g stroke="#c4c4c8"><path d="M235.500 82v20M389.500 82v20M426.500 82v20M511.500 82v20"/><path d="M133 78v30M560 78v30" stroke="#e0e0e4"/></g>
<g fill="#bbb"><circle cx="6" cy="58" r=".7"/><circle cx="6" cy="62" r=".7"/><circle cx="6" cy="66" r=".7"/><circle cx="6" cy="90" r=".7"/><circle cx="6" cy="94" r=".7"/><circle cx="6" cy="98" r=".7"/></g>
<!-- sliders -->
<defs><linearGradient id="g1"><stop offset="0" stop-color="#fff"/><stop offset=".2" stop-color="#f7d27a"/><stop offset=".5" stop-color="#f08a10"/><stop offset=".7" stop-color="#ff1e00"/><stop offset="1" stop-color="#ffd8d8"/></linearGradient>
<linearGradient id="g2"><stop offset="0" stop-color="#fff"/><stop offset=".3" stop-color="#b6c9dd"/><stop offset=".55" stop-color="#6e8af0"/><stop offset=".72" stop-color="#4c5ed0"/><stop offset="1" stop-color="#000"/></linearGradient>
<linearGradient id="g3"><stop offset="0" stop-color="#fff"/><stop offset="1" stop-color="#777"/></linearGradient>
<linearGradient id="g4" x1="0" x2="0" y1="0" y2="1"><stop offset="0" stop-color="#a9c6e4"/><stop offset="1" stop-color="#dbe7f3"/></linearGradient></defs>
<rect x="608" y="84" width="162" height="5" fill="url(#g1)" stroke="#cbcbcb" stroke-width=".8"/>
<rect x="788" y="84" width="162" height="5" fill="url(#g2)" stroke="#cbcbcb" stroke-width=".8"/>
<rect x="688" y="81" width="6" height="11" rx="1" fill="#e9e9e9" stroke="#aaa"/><rect x="879" y="81" width="6" height="11" rx="1" fill="#e9e9e9" stroke="#aaa"/>
</svg>
<div class="t" style="left:612px;top:93px;width:160px;font-size:10px;word-spacing:4.400px;color:#555">1 2 3 4 5 6 7 8 9 <span style="word-spacing:1px">10 11 12</span></div>
<div class="t" style="left:788px;top:93px;font-size:10px;color:#555">04:56 AM</div>
<div class="t" style="left:860px;top:93px;font-size:10px;color:#555">中午</div>
<div class="t" style="left:908px;top:93px;font-size:10px;color:#555">07:41 PM</div>

<!-- right panel -->
<div class="a" style="left:1528px;top:110px;width:272px;height:873px;background:#f0f0f5"></div>
<div class="a" style="left:1533px;top:111px;width:266px;height:872px;background:#f3f7fc;border:1px solid #9aa0a6;box-sizing:border-box"></div>
<svg width="1800" height="1013"><rect x="1534" y="112" width="265" height="24" fill="url(#g4)"/></svg>
<div class="t" style="left:1537px;top:119px;font-size:12px;font-weight:bold;color:#333">默认面板</div>
<div class="a" style="left:1785px;top:137px;width:1px;height:846px;background:#c6c9cd"></div>
<div class="a" style="left:1786px;top:140px;width:12px;height:840px;background:#eceef1"></div>
<div class="a" style="left:1786px;top:140px;width:12px;height:87px;background:#f7f7f8;border:1px solid #ddd;box-sizing:border-box"></div>
<svg width="1800" height="1013">
<path d="M1788 146l4-4 4 4z" fill="#999"/><path d="M1788 973l4 4 4-4z" fill="#999"/>
<rect x="1769.500" y="119.500" width="9" height="9" fill="none" stroke="#667"/><path d="M1771 121h6M1772 124h4M1774 122v5" stroke="#445"/>
<rect x="1786.500" y="119.500" width="9" height="9" fill="none" stroke="#667"/><path d="M1788 121l6 6M1794 121l-6 6" stroke="#445"/>
<path d="M1551 146H1753" stroke="#dfe2e6"/>
<rect x="1551" y="158" width="150" height="15" rx="1.500" fill="url(#g3)" stroke="#c6c6c6"/>
<rect x="1699" y="154" width="4" height="23" rx="1" fill="#eee" stroke="#bbb"/>
<path d="M1534 207.500H1785" stroke="#e3e5e9" stroke-width="2"/>
</svg>
<div class="a" style="left:1709px;top:155px;width:44px;height:22px;background:#fff;border:1px solid #777;box-sizing:border-box;border-radius:3px;font-size:12px;line-height:21px;padding-left:4px;color:#444">100</div>
<div class="a" style="left:1740px;top:155px;width:13px;height:22px;border:1px solid #777;box-sizing:border-box;border-radius:0 3px 3px 0;background:#f8f8f8"></div>
<svg width="1800" height="1013"><path d="M1744 163l2.500-3 2.500 3zM1744 169l2.500 3 2.500-3z" fill="#999"/></svg>

<div class="phd" style="top:211px;height:25px"><span style="position:absolute;left:23px;top:2px">组件</span></div>
<div class="box" style="left:1764px;top:214px;width:19px;height:20px;font-size:0"></div>
<div class="box" style="left:1534px;top:237px;width:79px;height:79px;border-radius:4px;background:#fff"></div>
<div class="box" style="left:1616px;top:237px;width:143px;height:23px;border-radius:3px"></div>
<div class="a" style="left:1616px;top:260px;width:143px;height:55px;background:#fff;border:1px solid #e9ebee;box-sizing:border-box"></div>
<svg width="1800" height="1013">
<path d="M1541 220l5 5 5-5" fill="none" stroke="#9a9ca0" stroke-width="1.200"/>
<path d="M1769 219l8 8M1777 219l-8 8" stroke="#999" stroke-width="1.100"/>
<!-- cube icon -->
<g transform="translate(-13 0)">
<g stroke="#2e2e42" stroke-width="3.400" stroke-linejoin="round">
<path d="M1576 257l11-4 11 4v13l-11 5-11-5z" fill="#8e8e74"/>
<path d="M1563 276l11-4 12 5v15l-12 5-11-5z" fill="#8e8e74"/>
<path d="M1588 280l11-4 11 5v14l-11 5-11-5z" fill="#8e8e74"/>
</g>
<path d="M1577 257l10-3 10 3-10 4z" fill="#d9d7b0"/><path d="M1565 277l9-3 10 4-10 3z" fill="#d9d7b0"/><path d="M1590 281l9-3 9 4-9 3z" fill="#d9d7b0"/>
</g>
<rect x="1767" y="242" width="10" height="20" fill="#222"/><path d="M1769 242h6v2l-3 3-3-3z" fill="#fff"/><rect x="1769" y="251" width="6" height="7" fill="#fff"/><path d="M1770 254.500h4M1772 252.500v4" stroke="#222" stroke-width="1"/>
<circle cx="1772" cy="267" r="3" fill="#8b8b7a"/><circle cx="1768" cy="272" r="3" fill="#8b8b7a"/><circle cx="1776" cy="272" r="3" fill="#8b8b7a"/>
</svg>
<div class="ptab on" style="left:1535px;top:324px;width:45px;height:27px;line-height:26px">选择</div>
<div class="ptab" style="left:1580px;top:326px;width:44px;height:24px;line-height:24px">编辑</div>
<div class="ptab" style="left:1625px;top:326px;width:65px;height:24px;line-height:24px">统计信息</div>
<div class="a" style="left:1534px;top:350px;width:251px;height:1px;background:#c9ccd0"></div>
<div class="box" style="left:1534px;top:352px;width:22px;height:21px"></div>
<div class="box" style="left:1557px;top:352px;width:21px;height:21px"></div>
<div class="box" style="left:1579px;top:352px;width:13px;height:21px"></div>
<div class="box" style="left:1594px;top:352px;width:167px;height:21px;font-size:11.5px;line-height:20px;padding-left:3px;color:#bbb">3D Warehouse</div>
<div class="box" style="left:1763px;top:352px;width:21px;height:21px"></div>
<div class="a" style="left:1744px;top:352px;width:1px;height:16px;background:#555"></div>
<div class="a" style="left:1534px;top:375px;width:251px;height:163px;background:#fff;border:1px solid #c9ccd0;box-sizing:border-box"></div>
<div class="a" style="left:1771px;top:376px;width:13px;height:161px;background:#fff;border-left:1px solid #dcdcdc"></div>
<div class="a" style="left:1772px;top:390px;width:12px;height:100px;background:#f0f0f0;border-bottom:1px solid #ccc"></div>
<div class="t" style="left:1603px;top:388px;font-size:10px;font-weight:bold;color:#111">组件取样</div>
<div class="t" style="left:1648px;top:546px;font-size:11.5px;color:#444">组件</div>
<div class="phd" style="top:568px;height:23px"><span style="position:absolute;left:23px;top:1px">样式</span></div>
<div class="box" style="left:1764px;top:570px;width:19px;height:19px"></div>
<svg width="1800" height="1013">
<path d="M1538 357h3v-2h3v2h3M1538 361h3v2h3v-2h3" stroke="#333" fill="none" transform="translate(0 2)"/><rect x="1538" y="357" width="3" height="3" fill="#333"/><rect x="1544" y="357" width="3" height="3" fill="#333"/><rect x="1538" y="365" width="3" height="3" fill="#333"/><rect x="1544" y="365" width="3" height="3" fill="#333"/><path d="M1550 362h4l-2 2z" fill="#333"/>
<path d="M1560 363l7.500-7 7.500 7M1562 362v8h11v-8" fill="none" stroke="#222" stroke-width="1.500"/><rect x="1566" y="365" width="3.500" height="5" fill="#222"/>
<path d="M1582 361h7l-3.500 4z" fill="#222"/>
<circle cx="1755" cy="360" r="3.500" fill="none" stroke="#222" stroke-width="1.300"/><path d="M1752.500 362.500L1748 367" stroke="#222" stroke-width="1.500"/>
<rect x="1768" y="357" width="7" height="12" fill="#fff" stroke="#222"/><path d="M1775 357l6 6-6 6z" fill="#111"/><path d="M1769 360h5M1769 363h5" stroke="#e8a33a"/>
<!-- folder thumb -->
<rect x="1542" y="385" width="57" height="59" fill="#d9d9d9" stroke="#bbb"/><rect x="1539" y="389" width="56" height="57" fill="#fff" stroke="#c0c0c0"/>
<path d="M1551 404l6-2 2 3 23-4v13h-31z" fill="#7cc0e8"/>
<path d="M1548 418l5 14 9 3-9-10z" fill="#888" opacity=".7"/>
<path d="M1555 407l28-4v28l-25 9z" fill="#bd9a6c"/>
<path d="M1775 386l3-3 3 3z" fill="#aaa"/><path d="M1775 529l3 3 3-3z" fill="#aaa"/>
<path d="M1549 546v3h4v6h-4v3l-6-6z" fill="#e8e8e8" stroke="#666" stroke-width="1.200"/>
<path d="M1771 546v3h-4v6h4v3l6-6z" fill="#e8e8e8" stroke="#666" stroke-width="1.200"/>
<path d="M1534 564.500H1785" stroke="#e3e5e9"/>
<path d="M1541 578l5 5 5-5" fill="none" stroke="#9a9ca0" stroke-width="1.200"/>
<path d="M1769 575l8 8M1777 575l-8 8" stroke="#999" stroke-width="1.100"/>
<!-- style thumb -->
<rect x="1535" y="593" width="77" height="77" rx="2" fill="#fff" stroke="#d0d0d0"/>
<rect x="1536" y="594" width="75" height="75" fill="#b9def5"/>
<rect x="1536" y="640" width="75" height="29" fill="#8fbb7f"/>
<path d="M1552 617l22-11 18 9v40l-22 9-18-14z" fill="#f1f1f1"/><path d="M1574 606l18 9-19 9-21-7z" fill="#c9c9c9"/>
<path d="M1575 624c0-3 28-3 28 0v36c0 3-28 3-28 0z" fill="#acc8d8"/>
<path d="M1539 595v60" stroke="#1a2ec0" stroke-width="1"/><path d="M1540 640l44 28" stroke="#c33" stroke-width="1.200"/>
<path d="M1556 625a18 18 0 0 1 30-7" fill="none" stroke="#666" stroke-width="5"/><path d="M1595 625l-14 2 10-15z" fill="#666"/>
<path d="M1591 641a18 18 0 0 1-29 8" fill="none" stroke="#666" stroke-width="5"/><path d="M1552 640l14-2-9 14z" fill="#666"/>
<circle cx="1603" cy="662" r="3" fill="#fff" stroke="#4a7" stroke-width="1"/>
<path d="M1767 601h12v20h-12z" fill="#222"/><path d="M1769 601h8v2l-4 4-4-4z" fill="#fff"/><rect x="1769" y="611" width="8" height="8" fill="#fff"/><path d="M1770 615h6M1773 612v6" stroke="#222"/>
<circle cx="1770" cy="636" r="4" fill="#fff" stroke="#222" stroke-width="1.300"/><path d="M1767 636h6M1770 633v6" stroke="#222"/><path d="M1772 632l4-6 4-1-3 7z" fill="#c5c09a"/><rect x="1778" y="628" width="4" height="8" fill="#2230c0"/>
<path d="M1767 655a6.500 6.500 0 0 1 12-2M1779 661a6.500 6.500 0 0 1-12 2" fill="none" stroke="#111" stroke-width="2"/>
<!-- style tab icons -->
<rect x="1534.500" y="715.500" width="21" height="21" rx="2" fill="#e6e6e8" stroke="#bbb"/>
<path d="M1539 721h8v10h-8zM1547 719h6v13h-6" fill="none" stroke="#333" stroke-width="1.300"/>
<path d="M1565 725h60" stroke="#ddd"/>
<path d="M1564 722l9-3h5l2 3v8l-2 3h-5l-9-2z" fill="#c8a578" stroke="#444"/>
<rect x="1584" y="726" width="23" height="11" fill="#e5c79a"/>
<path d="M1589 721l8-3h5l2 3v8l-2 3h-5l-8-2z" fill="#dcdcdc" stroke="#555"/>
<path d="M1614 722l9-3h5l2 3v8l-2 3h-5l-9-2z" fill="#c8a578" stroke="#444"/><circle cx="1624" cy="730" r="2.500" fill="#ddd" stroke="#333"/>
<path d="M1639 722l9-3h5l2 3v8l-2 3h-5l-9-2z" fill="#2c3ee8" stroke="#1a2aa0"/>
<path d="M1534 741.500H1785" stroke="#e3e5e9"/>
<path d="M1536 796.500H1776M1536 933.500H1776" stroke="#d3d6da"/>
</svg>
<div class="box" style="left:1616px;top:593px;width:145px;height:22px;border-radius:3px;font-size:11px;line-height:18px;padding-left:2px;color:#222">普通样式</div>
<div class="a" style="left:1616px;top:616px;width:146px;height:54px;background:#fff"></div>
<div class="t" style="left:1618px;top:621px;font-size:11.6px;line-height:16px;color:#444;white-space:normal;width:128px">Default face colors.<br>Blue sky and green<br>background color.</div>
<div class="a" style="left:1749px;top:616px;width:13px;height:54px;background:#fff;border-left:1px solid #ddd;box-sizing:border-box"></div>
<svg width="1800" height="1013"><path d="M1751 624l4-4 4 4z" fill="#aaa"/><path d="M1751 662l4 4 4-4z" fill="#aaa"/><path d="M1750 628.500h12M1750 657.500h12" stroke="#e3e3e3"/></svg>
<div class="ptab" style="left:1535px;top:681px;width:44px;height:24px;line-height:24px">选择</div>
<div class="ptab on" style="left:1579px;top:679px;width:45px;height:27px;line-height:26px;background:#f5f8fc">编辑</div>
<div class="ptab" style="left:1625px;top:681px;width:44px;height:24px;line-height:24px">混合</div>
<div class="a" style="left:1534px;top:705px;width:45px;height:1px;background:#c9ccd0"></div>
<div class="a" style="left:1624px;top:705px;width:161px;height:1px;background:#c9ccd0"></div>
<div class="t" style="left:1757px;top:717px;font-size:10.500px;font-weight:bold;color:#444">边线</div>

<div class="cb" style="top:753px"></div><div class="l" style="top:753px">边线</div>
<div class="cb d" style="top:776px"></div><div class="l d" style="top:776px">后边线</div>
<div class="cb" style="top:806px"></div><div class="l" style="top:806px">轮廓线<span style="color:#35619a">(P)</span></div>
<div class="cb d" style="top:832px"></div><div class="l d" style="top:832px">深粗线(D)</div>
<div class="cb d" style="top:858px"></div><div class="l d" style="top:858px">出头(E)</div>
<div class="cb d" style="top:884px"></div><div class="l d" style="top:884px">端点</div>
<div class="cb d" style="top:910px"></div><div class="l d" style="top:910px">短横</div>
<svg width="1800" height="1013"><path d="M1539 916l3 4 5-8" stroke="#777" fill="none" stroke-width="1.200"/></svg>
<div class="box" style="left:1633px;top:802px;width:25px;height:24px;font-size:12px;line-height:23px;padding-left:3px;color:#a8a8a8">2</div>
<div class="box" style="left:1633px;top:828px;width:25px;height:24px;font-size:12px;line-height:23px;padding-left:3px;color:#a8a8a8">4</div>
<div class="box" style="left:1633px;top:854px;width:25px;height:24px;font-size:12px;line-height:23px;padding-left:3px;color:#a8a8a8">3</div>
<div class="box" style="left:1633px;top:880px;width:25px;height:24px;font-size:12px;line-height:23px;padding-left:3px;color:#a8a8a8">9</div>
<div class="l" style="left:1536px;top:943px">颜色:</div>
<div class="box" style="left:1593px;top:939px;width:144px;height:22px;border-radius:3px;font-size:11.2px;line-height:21px;padding-left:3px;color:#333">全部相同</div>
<svg width="1800" height="1013"><path d="M1722 948h8l-4 4z" fill="#666"/></svg>
<div class="box" style="left:1741px;top:939px;width:21px;height:22px;padding:2px;background:#f4f4f4"><div style="width:100%;height:100%;background:#000"></div></div>

<!-- watermarks -->
<div class="wm" style="left:224px;top:97px">欧模网</div>
<div class="ww" style="left:677px;top:104px">www.om.cn</div>
<div class="wm" style="left:1125px;top:97px">欧模网</div>
<div class="ww" style="left:1573px;top:104px">www.om.cn</div>
<div class="ww" style="left:40px;top:338px">www.om.cn</div>
<div class="wm" style="left:450px;top:331px">欧模网</div>
<div class="ww" style="left:901px;top:338px">www.om.cn</div>
<div class="wm" style="left:1350px;top:331px">欧模网</div>
<div class="wm" style="left:224px;top:565px">欧模网</div>
<div class="ww" style="left:677px;top:572px">www.om.cn</div>
<div class="wm" style="left:1125px;top:565px">欧模网</div>
<div class="ww" style="left:1573px;top:572px">www.om.cn</div>
<div class="ww" style="left:40px;top:807px">www.om.cn</div>
<div class="wm" style="left:450px;top:800px">欧模网</div>
<div class="ww" style="left:901px;top:807px">www.om.cn</div>
<div class="wm" style="left:1350px;top:800px">欧模网</div>
<div class="t" style="left:1476px;top:823px;font-family:'Noto Sans CJK SC',sans-serif;font-size:73px;color:rgba(58,58,58,.88);letter-spacing:1px">欧模网</div>
</body></html>
